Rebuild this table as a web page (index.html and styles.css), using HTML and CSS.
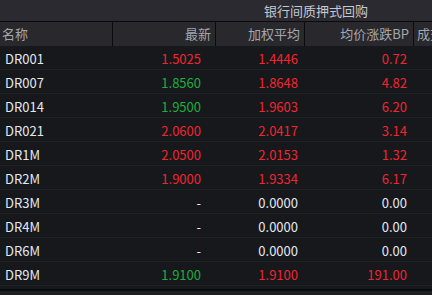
FILE: index.html
```html
<!DOCTYPE html>
<html lang="zh-CN">
<head>
<meta charset="utf-8">
<link rel="stylesheet" href="styles.css">
</head>
<body>
<div class="table">
  <div class="row group">
    <div class="cell"></div>
    <div class="cell"></div>
    <div class="cell span">银行间质押式回购</div>
    <div class="cell"></div>
  </div>
  <div class="row head">
    <div class="cell name">名称</div>
    <div class="cell">最新</div>
    <div class="cell">加权平均</div>
    <div class="cell">均价涨跌BP</div>
    <div class="cell last">成交</div>
  </div>
  <div class="row data"><div class="cell name">DR001</div><div class="cell latest red">1.5025</div><div class="cell red">1.4446</div><div class="cell red">0.72</div><div class="cell"></div></div>
  <div class="row data"><div class="cell name">DR007</div><div class="cell latest green">1.8560</div><div class="cell red">1.8648</div><div class="cell red">4.82</div><div class="cell"></div></div>
  <div class="row data"><div class="cell name">DR014</div><div class="cell latest green">1.9500</div><div class="cell red">1.9603</div><div class="cell red">6.20</div><div class="cell"></div></div>
  <div class="row data"><div class="cell name">DR021</div><div class="cell latest red">2.0600</div><div class="cell red">2.0417</div><div class="cell red">3.14</div><div class="cell"></div></div>
  <div class="row data"><div class="cell name">DR1M</div><div class="cell latest red">2.0500</div><div class="cell red">2.0153</div><div class="cell red">1.32</div><div class="cell"></div></div>
  <div class="row data"><div class="cell name">DR2M</div><div class="cell latest red">1.9000</div><div class="cell red">1.9334</div><div class="cell red">6.17</div><div class="cell"></div></div>
  <div class="row data"><div class="cell name">DR3M</div><div class="cell latest">-</div><div class="cell">0.0000</div><div class="cell">0.00</div><div class="cell"></div></div>
  <div class="row data"><div class="cell name">DR4M</div><div class="cell latest">-</div><div class="cell">0.0000</div><div class="cell">0.00</div><div class="cell"></div></div>
  <div class="row data"><div class="cell name">DR6M</div><div class="cell latest">-</div><div class="cell">0.0000</div><div class="cell">0.00</div><div class="cell"></div></div>
  <div class="row data"><div class="cell name">DR9M</div><div class="cell latest green">1.9100</div><div class="cell red">1.9100</div><div class="cell red">191.00</div><div class="cell"></div></div>
  <div class="footer"></div>
</div>
</body>
</html>
```
FILE: styles.css
```css
html, body {
  margin: 0;
  padding: 0;
  background: #16181c;
}
body {
  width: 432px;
  height: 295px;
  overflow: hidden;
  font-family: "Noto Sans CJK SC", "Noto Sans", sans-serif;
  font-size: 13px;
}
.table {
  width: 432px;
  overflow: hidden;
}
.row {
  display: grid;
  grid-template-columns: 113px 103px 89px 109px 18px;
  width: 432px;
}
.cell {
  box-sizing: border-box;
  white-space: nowrap;
  overflow: hidden;
  text-align: right;
}
.group {
  height: 22px;
  background: #2b2a30;
  border-bottom: 1px solid #0b0b0d;
  box-sizing: border-box;
  color: #c4c8d0;
  line-height: 21px;
}
.group .span {
  grid-column: 3 / 5;
  text-align: center;
  padding-left: 2px;
}
.head {
  height: 24px;
  background: #28282d;
  color: #a4a7ae;
  line-height: 23px;
}
.head .cell {
  border-right: 1px solid #0b0b0d;
  padding-right: 4px;
}
.head .name {
  text-align: left;
  padding-left: 2px;
}
.head .last {
  text-align: left;
  padding-left: 3px;
  padding-right: 0;
  border-right: none;
  text-overflow: clip;
}
.data {
  height: 24px;
  border-bottom: 1px solid #202227;
  box-sizing: border-box;
  color: #e4e8ee;
  line-height: 23px;
}
.data .cell {
  padding-right: 7px;
  padding-top: 1px;
}
.data .name {
  text-align: left;
  padding-left: 5px;
}
.data .latest {
  padding-right: 15px;
}
.red {
  color: #f0252f;
}
.green {
  color: #1cae3c;
}
.footer {
  height: 9px;
  border-top: 3px solid #16181c;
  box-sizing: border-box;
  background: linear-gradient(#0b0b0d 0 2px, #1f2024 2px);
}
```
